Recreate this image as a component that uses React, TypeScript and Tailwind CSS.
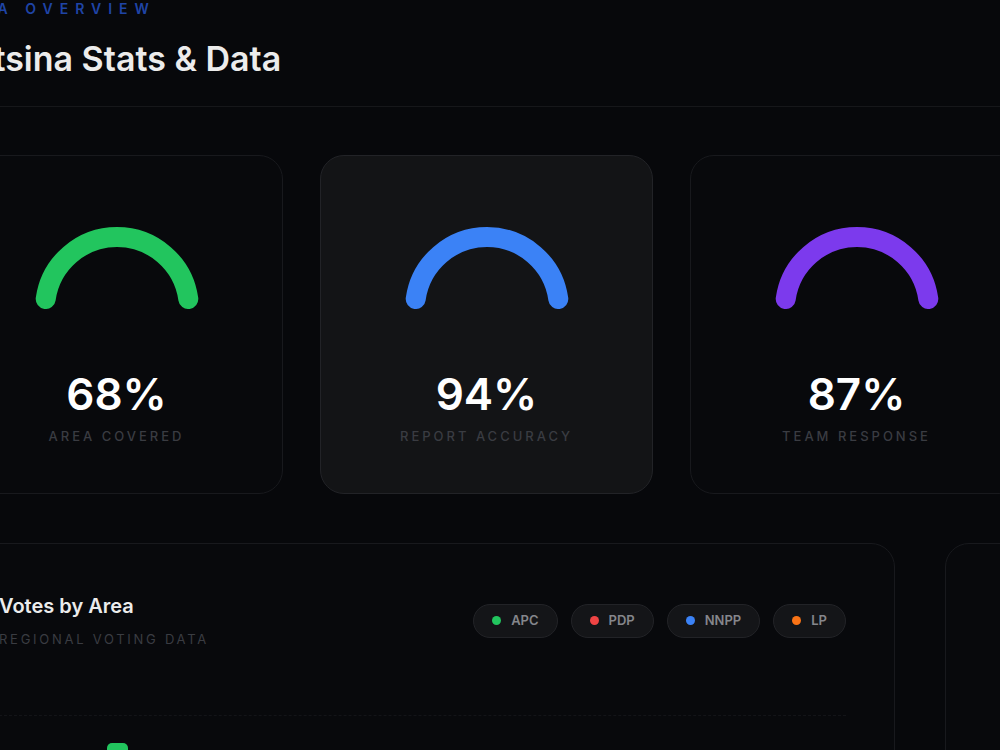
import React from "react";

const gauges = [
  { value: "68%", label: "AREA COVERED", color: "#22c55e", active: false },
  { value: "94%", label: "REPORT ACCURACY", color: "#3b82f6", active: true },
  { value: "87%", label: "TEAM RESPONSE", color: "#7c3aed", active: false },
  { value: "72%", label: "TURNOUT", color: "#f97316", active: false },
];

const legend = [
  { name: "APC", color: "#22c55e" },
  { name: "PDP", color: "#ef4444" },
  { name: "NNPP", color: "#3b82f6" },
  { name: "LP", color: "#f97316" },
];

const groups = [
  [252, 180, 120, 60],
  [200, 160, 110, 50],
  [180, 210, 90, 70],
  [220, 140, 130, 40],
  [190, 170, 100, 60],
  [230, 150, 80, 55],
];
const barColors = ["#22c55e", "#ef4444", "#3b82f6", "#f97316"];

function Gauge({ color }: { color: string }) {
  return (
    <svg width="180" height="92" viewBox="0 0 180 92" fill="none">
      <path
        d="M 18.7 82 A 72 72 0 0 1 161.3 82"
        stroke={color}
        strokeWidth="20"
        strokeLinecap="round"
        fill="none"
      />
    </svg>
  );
}

export default function App() {
  return (
    <div
      className="min-h-screen w-full overflow-hidden bg-[#07080b] text-white"
      style={{ fontFamily: "Inter, 'Noto Sans', sans-serif" }}
    >
      <header className="border-b border-[#16171a]">
        <div className="-ml-[50px] pb-[27px]">
          <div className="-mt-px text-[14px] leading-5 font-semibold tracking-[0.5em] text-[#1f44a6]">
            DATA OVERVIEW
          </div>
          <h1 className="mt-5 text-[34px] leading-10 font-semibold text-[#ececec]">
            Katsina Stats &amp; Data
          </h1>
        </div>
      </header>

      <main className="-ml-[50px] w-[1450px] pt-12">
        <div className="flex gap-[37px]">
          {gauges.map((g) => (
            <div
              key={g.label}
              className={
                g.active
                  ? "flex h-[339px] w-[333px] shrink-0 flex-col items-center rounded-[24px] border border-[#222327] bg-[#131416] pt-[61px]"
                  : "flex h-[339px] w-[333px] shrink-0 flex-col items-center rounded-[24px] border border-[#18191d] bg-[#08090c] pt-[61px]"
              }
            >
              <Gauge color={g.color} />
              <div className="mt-[63px] text-[44px] leading-[44px] font-semibold text-white">
                {g.value}
              </div>
              <div className="mt-[10px] text-[13px] leading-5 font-medium tracking-[0.23em] text-[#3a3c42]">
                {g.label}
              </div>
            </div>
          ))}
        </div>

        <div className="mt-[49px] flex gap-[50px]">
          <div className="w-[945px] shrink-0 rounded-[24px] border border-[#18191d] bg-[#08090c] p-12">
            <div className="flex items-center justify-between">
              <div>
                <div className="text-[20px] leading-7 font-semibold text-[#ececec]">
                  Votes by Area
                </div>
                <div className="mt-[9px] text-[13px] leading-5 tracking-[0.21em] text-[#3a3c42]">
                  REGIONAL VOTING DATA
                </div>
              </div>
              <div className="flex gap-[13px]">
                {legend.map((l) => (
                  <div
                    key={l.name}
                    className="flex h-[34px] items-center gap-[10px] rounded-full border border-[#222327] bg-[#141518] px-[18px]"
                  >
                    <span
                      className="h-[9px] w-[9px] rounded-full"
                      style={{ backgroundColor: l.color }}
                    />
                    <span className="text-[13px] font-semibold text-[#85868b]">
                      {l.name}
                    </span>
                  </div>
                ))}
              </div>
            </div>
            <div className="mt-[66px] flex h-[280px] items-end gap-[40px] border-t border-dashed border-[#131418] pl-[108px]">
              {groups.map((grp, i) => (
                <div key={i} className="flex items-end gap-1">
                  {grp.map((h, j) => (
                    <div
                      key={j}
                      className="w-[21px] rounded-t-[5px]"
                      style={{ height: h, backgroundColor: barColors[j] }}
                    />
                  ))}
                </div>
              ))}
            </div>
          </div>
          <div className="h-[500px] w-[455px] shrink-0 rounded-[24px] border border-[#18191d] bg-[#08090c]" />
        </div>
      </main>
    </div>
  );
}
